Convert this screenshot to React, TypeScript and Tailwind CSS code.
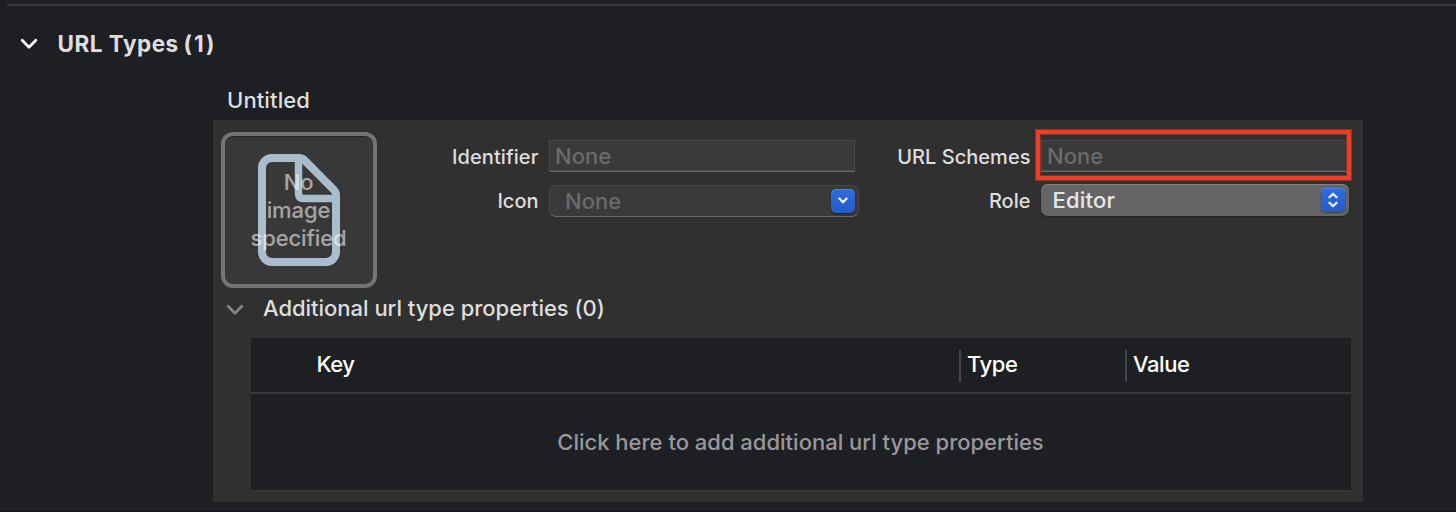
import type { ReactNode } from "react";

function Chevron({ className }: { className: string }) {
  return (
    <svg viewBox="0 0 18 12" className={className} fill="none" stroke="currentColor" strokeLinecap="round" strokeLinejoin="round">
      <path d="M2.200 2.200 9 9.200l6.800-7" strokeWidth="2.700" />
    </svg>
  );
}

function Label({ children, className }: { children: ReactNode; className: string }) {
  return (
    <div className={`shrink-0 pr-[0.500px] text-right text-[20px] font-medium whitespace-nowrap text-[#dedede] ${className}`}>
      {children}
    </div>
  );
}

function ImageWell() {
  return (
    <div className="relative flex size-[156px] shrink-0 items-center justify-center rounded-[12px] border-4 border-[#747474] bg-[#383838] shadow-[inset_0_1px_1px_#242424]">
      <svg viewBox="0 0 82 112" className="h-[112px] w-[82px]" fill="none" stroke="#a9bdcd" strokeWidth="8" strokeLinejoin="round">
        <path d="M14 4H41.500Q44.500 4 46.500 6.200L75.500 35.500Q78 38 78 41V98a10 10 0 0 1-10 10H14a10 10 0 0 1-10-10V14a10 10 0 0 1 10-10Z" />
        <path d="M40.500 5V39.500Q40.500 44.500 45.500 44.500H78" strokeWidth="7.500" />
      </svg>
      <div className="absolute top-[32px] right-px left-0 text-center text-[22px] leading-[28px] font-[450] tracking-[-0.100px] text-white/55">
        No
        <br />
        image
        <br />
        specified
      </div>
    </div>
  );
}

function TextInput() {
  return (
    <div className="h-8 w-[306px] shrink-0 border border-[#484848] border-b-[#6a6a6a] bg-[#3a3a3a] pl-[5px] text-[22px] leading-[31px] font-[450] text-[#6b6b6b] shadow-[inset_0_-1px_0_#4c4c4c]">
      None
    </div>
  );
}

function ComboBox() {
  return (
    <div className="relative flex h-8 w-[310px] shrink-0 items-center justify-between rounded-[7px] border border-[#484848] border-b-[#6a6a6a] bg-[#3a3a3a] pr-[3px] pb-px pl-[15px]">
      <span className="pt-px text-[22px] leading-[29px] font-[450] text-[#6b6b6b]">None</span>
      <span className="flex size-6 items-center justify-center rounded-[5px] bg-linear-to-b from-[#2e6be0] to-[#255bc6] text-[#f1f5fd] shadow-[0_1px_2px_rgba(0,0,0,0.5),inset_0_1px_0_#5085e6]">
        <svg viewBox="0 0 10 7" className="h-[7px] w-[10px]" fill="none" stroke="currentColor" strokeWidth="2.200" strokeLinecap="round" strokeLinejoin="round">
          <path d="M1.400 1.500 5 5.300l3.600-3.800" />
        </svg>
      </span>
    </div>
  );
}

function PopUpButton() {
  return (
    <div className="flex h-8 w-[308px] shrink-0 items-center justify-between rounded-[7px] bg-[#656565] pr-[4px] pl-[11.500px] shadow-[inset_0_1px_0_#838383,0_1px_2px_rgba(0,0,0,0.35)]">
      <span className="text-[22px] leading-8 font-[450] tracking-[0.200px] text-[#e8e8e8]">Editor</span>
      <span className="flex size-6 items-center justify-center rounded-[5px] bg-linear-to-b from-[#2e6be0] to-[#255bc6] text-[#e9effc] shadow-[0_1px_2px_rgba(0,0,0,0.4),inset_0_1px_0_#5085e6]">
        <svg viewBox="0 0 10 16" className="h-4 w-[10px]" fill="none" stroke="currentColor" strokeWidth="2.200" strokeLinecap="round" strokeLinejoin="round">
          <path d="M1.400 5.300 5 1.700l3.600 3.600M1.400 10.700 5 14.300l3.600-3.600" />
        </svg>
      </span>
    </div>
  );
}

function PropertiesTable() {
  return (
    <div className="ml-[38px] h-[154px] w-[1100px] border-b-2 border-[#36353a] bg-[#1e1f23]">
      <div className="flex h-14 items-center border-b-2 border-[#38383c] pt-px text-[22px] leading-8 font-medium text-white">
        <div className="w-[708px] pb-[3px] pl-[65.500px] tracking-[-0.500px]">Key</div>
        <div className="h-8 w-[166px] border-l-2 border-[#424347] pl-[6px] tracking-[-0.400px]">
          <div className="-mt-[2px]">Type</div>
        </div>
        <div className="h-8 border-l-2 border-[#424347] pl-[6px] tracking-[-0.400px]">
          <div className="-mt-[2px]">Value</div>
        </div>
      </div>
      <div className="h-24 pt-8 pr-px text-center text-[22px] leading-8 font-[450] text-[#98989a]">
        Click here to add additional url type properties
      </div>
    </div>
  );
}

export default function App() {
  return (
    <div className="flex h-[512px] w-[1456px] flex-col overflow-hidden border-b border-[#151518] bg-[#1e1f23] pt-1 font-['Inter','Liberation_Sans',sans-serif]">
      <div className="ml-[7px] h-[2px] shrink-0 bg-[#38383c]" />
      <div className="mt-[22px] flex h-8 shrink-0 items-center pl-5">
        <Chevron className="h-3 w-[18px] text-white" />
        <h1 className="ml-[19.500px] text-[22.500px] leading-8 font-bold tracking-[0.500px] whitespace-nowrap text-[#dededf]">
          URL Types <span className="-ml-px tracking-[2px]">(1)</span>
        </h1>
      </div>
      <div className="mt-6 ml-[227px] h-8 shrink-0 text-[22px] leading-8 font-[450] tracking-[0.120px] text-[#dededf]">Untitled</div>
      <div className="mt-1 ml-[213px] h-[382px] w-[1150px] shrink-0 bg-[#303030]">
        <div className="flex pt-3 pl-2">
          <ImageWell />
          <div className="flex flex-col gap-[13px] pt-2">
            <div className="flex h-8">
              <Label className="w-[162px] leading-[34px] tracking-[0.100px]">Identifier</Label>
              <div className="ml-[10px] flex">
                <TextInput />
              </div>
              <Label className="w-[176px] leading-[34px] tracking-[0.030px]">URL Schemes</Label>
              <div className="relative ml-[10px] h-8 w-[306px]">
                <TextInput />
                <div className="absolute -top-[11px] -left-[6px] h-[52px] w-[317px] border border-[#8f3427]">
                  <div className="h-full w-full border-4 border-[#ec3e25] shadow-[inset_0_0_0_1px_#7c3328]" />
                </div>
              </div>
            </div>
            <div className="flex h-8">
              <Label className="w-[162px] leading-8">Icon</Label>
              <div className="ml-[10px] flex">
                <ComboBox />
              </div>
              <Label className="w-[172px] leading-8">Role</Label>
              <div className="-mt-px ml-[10px] flex">
                <PopUpButton />
              </div>
            </div>
          </div>
        </div>
        <div className="mt-1 mb-[14px] flex h-8 items-center pl-[13px]">
          <Chevron className="mt-[3px] h-3 w-[18px] text-[#858585]" />
          <h2 className="ml-[19px] text-[22px] leading-8 font-[450] tracking-[-0.020px] text-[#dedede]">Additional url type properties (0)</h2>
        </div>
        <PropertiesTable />
      </div>
    </div>
  );
}
